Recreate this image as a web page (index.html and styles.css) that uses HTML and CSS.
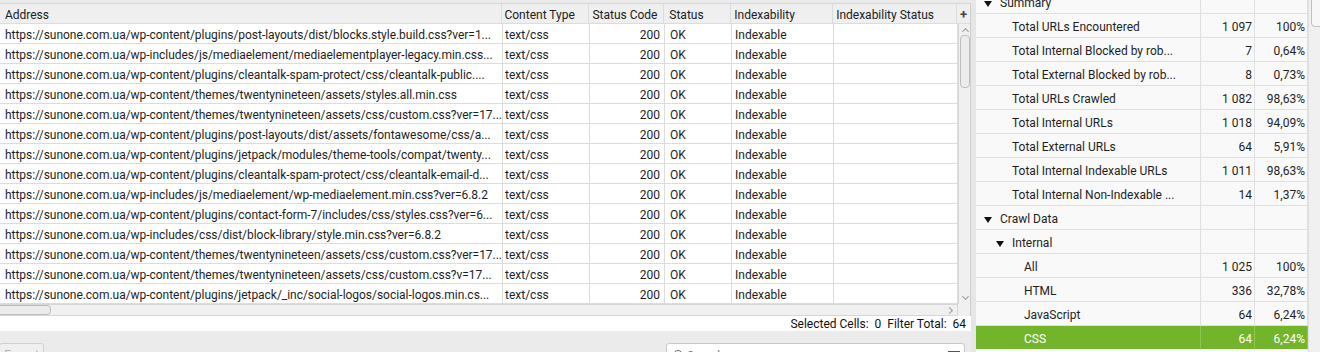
FILE: index.html
```html
<!DOCTYPE html>
<html lang="en">
<head>
    <meta charset="UTF-8">
    <title>Crawl - CSS</title>
    <link rel="stylesheet" href="styles.css">
</head>
<body>
    <div class="app">
        <section class="crawl">
            <div class="grid">
                <div class="grid-head">
                    <div class="th c-addr">Address</div>
                    <div class="th c-type">Content Type</div>
                    <div class="th c-code">Status Code</div>
                    <div class="th c-status">Status</div>
                    <div class="th c-idx">Indexability</div>
                    <div class="th c-idxs">Indexability Status</div>
                    <div class="th c-add">+</div>
                </div>
                <div class="grid-body">
                    <div class="rows" id="rows"></div>
                    <div class="vscroll">
                        <span class="arrow-up"></span>
                        <div class="vthumb"></div>
                        <span class="arrow-down"></span>
                    </div>
                </div>
                <div class="hscroll">
                    <div class="hthumb"></div>
                    <span class="arrow-right"></span>
                    <div class="corner"></div>
                </div>
            </div>
            <div class="statusbar">Selected Cells:&nbsp; 0&nbsp; Filter Total:&nbsp; 64</div>
            <div class="toolbar">
                <button class="export-btn">Export</button>
                <div class="search">
                    <span class="search-icon"></span>
                    <span class="search-text">Search</span>
                    <span class="filter-icon"></span>
                </div>
            </div>
        </section>

        <div class="splitter"></div>

        <aside class="overview">
            <div class="tree" id="tree"></div>
            <div class="side-scroll"><div class="side-thumb"></div></div>
        </aside>
    </div>

    <script>
        const urls = [
            'https://sunone.com.ua/wp-content/plugins/post-layouts/dist/blocks.style.build.css?ver=1...',
            'https://sunone.com.ua/wp-includes/js/mediaelement/mediaelementplayer-legacy.min.css...',
            'https://sunone.com.ua/wp-content/plugins/cleantalk-spam-protect/css/cleantalk-public....',
            'https://sunone.com.ua/wp-content/themes/twentynineteen/assets/styles.all.min.css',
            'https://sunone.com.ua/wp-content/themes/twentynineteen/assets/css/custom.css?ver=17...',
            'https://sunone.com.ua/wp-content/plugins/post-layouts/dist/assets/fontawesome/css/a...',
            'https://sunone.com.ua/wp-content/plugins/jetpack/modules/theme-tools/compat/twenty...',
            'https://sunone.com.ua/wp-content/plugins/cleantalk-spam-protect/css/cleantalk-email-d...',
            'https://sunone.com.ua/wp-includes/js/mediaelement/wp-mediaelement.min.css?ver=6.8.2',
            'https://sunone.com.ua/wp-content/plugins/contact-form-7/includes/css/styles.css?ver=6...',
            'https://sunone.com.ua/wp-includes/css/dist/block-library/style.min.css?ver=6.8.2',
            'https://sunone.com.ua/wp-content/themes/twentynineteen/assets/css/custom.css?ver=17...',
            'https://sunone.com.ua/wp-content/themes/twentynineteen/assets/css/custom.css?v=17...',
            'https://sunone.com.ua/wp-content/plugins/jetpack/_inc/social-logos/social-logos.min.cs...'
        ];

        const rows = document.getElementById('rows');
        urls.forEach(url => {
            const tr = document.createElement('div');
            tr.className = 'tr';
            tr.innerHTML =
                `<div class="td c-addr">${url}</div>` +
                `<div class="td c-type">text/css</div>` +
                `<div class="td c-code num">200</div>` +
                `<div class="td c-status">OK</div>` +
                `<div class="td c-idx">Indexable</div>` +
                `<div class="td c-idxs"></div>`;
            rows.appendChild(tr);
        });

        // level: 0 = section, 1 = group, 2 = item
        const tree = [
            { label: 'Summary', level: 0, open: true },
            { label: 'Total URLs Encountered', level: 1, count: '1 097', pct: '100%' },
            { label: 'Total Internal Blocked by rob...', level: 1, count: '7', pct: '0,64%' },
            { label: 'Total External Blocked by rob...', level: 1, count: '8', pct: '0,73%' },
            { label: 'Total URLs Crawled', level: 1, count: '1 082', pct: '98,63%' },
            { label: 'Total Internal URLs', level: 1, count: '1 018', pct: '94,09%' },
            { label: 'Total External URLs', level: 1, count: '64', pct: '5,91%' },
            { label: 'Total Internal Indexable URLs', level: 1, count: '1 011', pct: '98,63%' },
            { label: 'Total Internal Non-Indexable ...', level: 1, count: '14', pct: '1,37%' },
            { label: 'Crawl Data', level: 0, open: true },
            { label: 'Internal', level: 1, open: true },
            { label: 'All', level: 2, count: '1 025', pct: '100%' },
            { label: 'HTML', level: 2, count: '336', pct: '32,78%' },
            { label: 'JavaScript', level: 2, count: '64', pct: '6,24%' },
            { label: 'CSS', level: 2, count: '64', pct: '6,24%', selected: true }
        ];

        const treeEl = document.getElementById('tree');
        tree.forEach(item => {
            const row = document.createElement('div');
            row.className = 'node' + (item.selected ? ' selected' : '');
            const toggle = item.open ? '<span class="caret"></span>' : '';
            row.innerHTML =
                `<div class="n-label lvl-${item.level}">${toggle}${item.label}</div>` +
                `<div class="n-count">${item.count || ''}</div>` +
                `<div class="n-pct">${item.pct || ''}</div>`;
            treeEl.appendChild(row);
        });
    </script>
</body>
</html>
```

FILE: styles.css
```css
* {
    margin: 0;
    padding: 0;
    box-sizing: border-box;
}

body {
    width: 1320px;
    height: 352px;
    overflow: hidden;
    background: #ebebeb;
    font-family: Roboto, 'Liberation Sans', sans-serif;
    font-size: 12px;
    color: #1e1e1e;
}

.app {
    display: flex;
    height: 352px;
}

/* left: crawl table */

.crawl {
    width: 971px;
    display: flex;
    flex-direction: column;
}

.grid {
    margin-top: 3px;
    background: #fff;
    border-top: 1px solid #d6d6d6;
    border-right: 1px solid #cfcfcf;
}

.grid-head,
.tr {
    display: flex;
}

.th,
.td {
    height: 20px;
    white-space: nowrap;
    overflow: hidden;
    padding: 4px 3px 0;
    line-height: 15px;
    border-right: 1px solid #dcdcdc;
    border-bottom: 1px solid #dcdcdc;
}

.th {
    background: #efefef;
    color: #202020;
}

.num {
    text-align: right;
}

.c-addr { width: 503px; padding-left: 5px; padding-right: 0; letter-spacing: -0.03px; }
.c-type { width: 87px; padding-left: 2px; }
.c-code { width: 75px; padding-right: 4px; }
.c-status { width: 67px; padding-left: 5px; }
.c-idx { width: 102px; }
.c-idxs { width: 124px; }

.th.c-add {
    width: 13px;
    padding: 3px 0 0;
    border-right: none;
    text-align: center;
    font-weight: bold;
    font-size: 13px;
    color: #444;
}

.grid-body {
    display: flex;
}

.vscroll {
    width: 13px;
    height: 280px;
    background: #f0f0f0;
    border-left: 1px solid #d6d6d6;
    position: relative;
}

.vthumb {
    position: absolute;
    top: 11px;
    left: 1px;
    width: 10px;
    height: 53px;
    border: 1px solid #bdbdbd;
    border-radius: 4px;
    background: #ececec;
}

.arrow-up,
.arrow-down,
.arrow-right {
    position: absolute;
    width: 5px;
    height: 5px;
    border-left: 1px solid #9a9a9a;
    border-top: 1px solid #9a9a9a;
}

.arrow-up {
    top: 5px;
    left: 4px;
    transform: rotate(45deg);
}

.arrow-down {
    bottom: 5px;
    left: 4px;
    transform: rotate(225deg);
}

.hscroll {
    height: 12px;
    background: #f0f0f0;
    border-top: 1px solid #d6d6d6;
    border-bottom: 1px solid #d6d6d6;
    position: relative;
}

.hthumb {
    position: absolute;
    top: 0;
    left: -4px;
    width: 55px;
    height: 10px;
    border: 1px solid #bdbdbd;
    border-radius: 4px;
    background: #ececec;
}

.arrow-right {
    top: 3px;
    right: 18px;
    transform: rotate(135deg);
}

.corner {
    position: absolute;
    top: -1px;
    right: 0;
    width: 13px;
    height: 12px;
    background: #f0f0f0;
    border-left: 1px solid #d6d6d6;
}

.statusbar {
    height: 15px;
    padding-top: 1px;
    line-height: 14px;
    background: #fff;
    text-align: right;
    padding-right: 5px;
    color: #111;
}

.toolbar {
    flex: 1;
    display: flex;
    align-items: flex-start;
    justify-content: space-between;
    padding-top: 12px;
    padding-right: 6px;
}

.export-btn {
    width: 45px;
    height: 22px;
    margin-left: -1px;
    border: 1px solid #d0d0d0;
    border-radius: 3px;
    background: #f0f0f0;
    color: #b0b0b0;
    font-family: inherit;
    font-size: 12px;
    line-height: 14px;
    padding-top: 2px;
}

.search {
    width: 299px;
    height: 24px;
    background: #fff;
    border: 1px solid #c8c8c8;
    border-radius: 3px;
    position: relative;
    padding: 5px 0 0 20px;
    color: #777;
}

.search-icon {
    position: absolute;
    top: 6px;
    left: 6px;
    width: 10px;
    height: 10px;
    border: 1.5px solid #666;
    border-radius: 50%;
}

.filter-icon {
    position: absolute;
    top: 7px;
    right: 4px;
    width: 12px;
    height: 2px;
    background: #555;
}

.splitter {
    width: 5px;
    background: #e6e6e6;
}

/* right: overview tree */

.overview {
    width: 344px;
    display: flex;
    background: #fff;
}

.tree {
    width: 332px;
    margin-top: -10px;
    background: #f9f9f9;
}

.node {
    display: flex;
    height: 24px;
    color: #1e1e1e;
}

.node > div {
    padding-top: 4px;
    line-height: 19px;
    border-bottom: 1px solid #e0e0e0;
    border-right: 1px solid #e0e0e0;
    white-space: nowrap;
    overflow: hidden;
}

.n-label {
    width: 225px;
    position: relative;
}

.n-count {
    width: 54px;
    text-align: right;
    padding-right: 2px;
}

.n-pct {
    width: 53px;
    text-align: right;
    padding-right: 2px;
}

.lvl-0 { padding-left: 24px; }
.lvl-1 { padding-left: 36px; }
.lvl-2 { padding-left: 48px; }

.caret {
    position: absolute;
    top: 11px;
    width: 0;
    height: 0;
    border-left: 4px solid transparent;
    border-right: 4px solid transparent;
    border-top: 6px solid #111;
}

.lvl-0 .caret { left: 8px; }
.lvl-1 .caret { left: 20px; }

.node.selected > div {
    background: #72b52b;
    color: #fff;
    border-right-color: #8cc653;
    border-bottom-color: #fff;
}

.side-scroll {
    width: 12px;
    background: #f0f0f0;
    border-left: 1px solid #e0e0e0;
    position: relative;
}

.side-thumb {
    position: absolute;
    top: -4px;
    left: 2px;
    width: 12px;
    height: 31px;
    border: 1px solid #c0c0c0;
    border-radius: 4px;
    background: #f7f7f7;
}
```
